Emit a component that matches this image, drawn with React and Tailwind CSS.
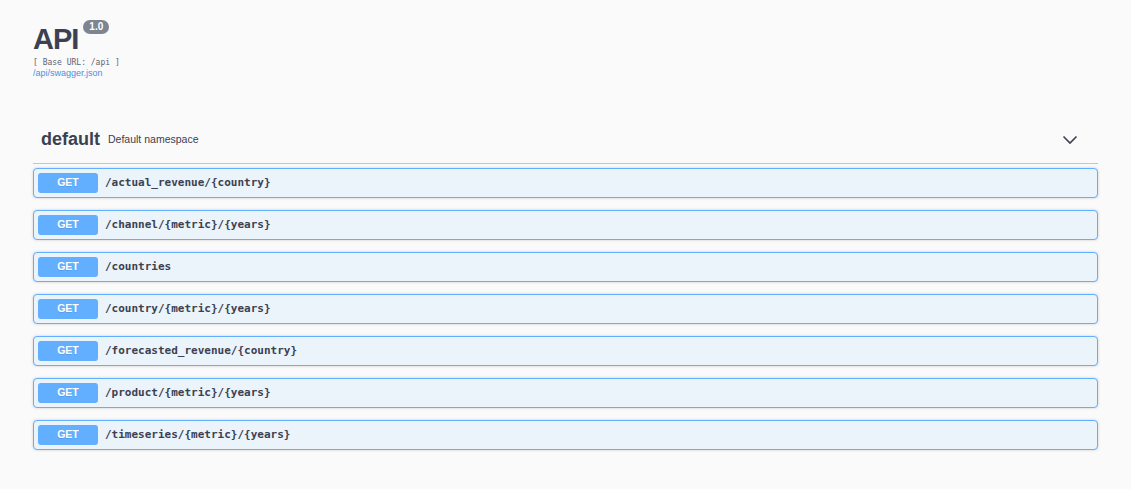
const routes = [
  "/actual_revenue/{country}",
  "/channel/{metric}/{years}",
  "/countries",
  "/country/{metric}/{years}",
  "/forecasted_revenue/{country}",
  "/product/{metric}/{years}",
  "/timeseries/{metric}/{years}",
];

const sans = "font-['Liberation_Sans',Arial,sans-serif]";
const mono = "font-['DejaVu_Sans_Mono',monospace]";

const Chevron = () => (
  <svg width="16" height="10" viewBox="0 0 16 10" className="text-[#3b4151]">
    <path d="M1.5 1.5 L8 8 L14.5 1.5" fill="none" stroke="currentColor" strokeWidth="1.6" />
  </svg>
);

export default function App() {
  return (
    <div className={`min-h-[489px] bg-[#fafafa] px-[33px] text-[#3b4151] ${sans}`}>
      <div className="pt-[22px]">
        <div className="flex items-start">
          <h1 className="text-[29px] font-bold leading-[34px] tracking-[-1px]">API</h1>
          <span className="ml-[5px] mt-[-2px] flex h-[14px] items-center rounded-full bg-[#7d8492] px-[6px] text-[10px] font-bold leading-none text-white">
            1.0
          </span>
        </div>
        <p className={`mt-[1px] text-[8px] leading-[11px] text-[#5f6470] ${mono}`}>[ Base URL: /api ]</p>
        <a className="block text-[9px] leading-[11px] text-[#4990e2]">/api/swagger.json</a>
      </div>

      <div className="mt-[37px]">
        <div className="flex h-[48px] items-center border-b border-[#c4c6cb] pl-[8px] pr-[20px]">
          <h3 className="text-[18px] font-bold">default</h3>
          <span className="ml-[8px] text-[10.5px]">Default namespace</span>
          <div className="ml-auto">
            <Chevron />
          </div>
        </div>

        <div className="mt-[4px] flex flex-col gap-[12px]">
          {routes.map((route) => (
            <div
              key={route}
              className="flex h-[30px] items-center rounded-[4px] border border-[#61affe] bg-[#ebf3fb] px-[4px] shadow-[0_0_3px_rgba(0,0,0,0.19)]"
            >
              <span className="flex h-[20px] w-[60px] items-center justify-center rounded-[3px] bg-[#61affe] text-[10.5px] font-bold text-white [text-shadow:0_1px_0_rgba(0,0,0,0.1)]">
                GET
              </span>
              <span className={`ml-[7px] text-[11px] font-semibold ${mono}`}>{route}</span>
            </div>
          ))}
        </div>
      </div>
    </div>
  );
}
